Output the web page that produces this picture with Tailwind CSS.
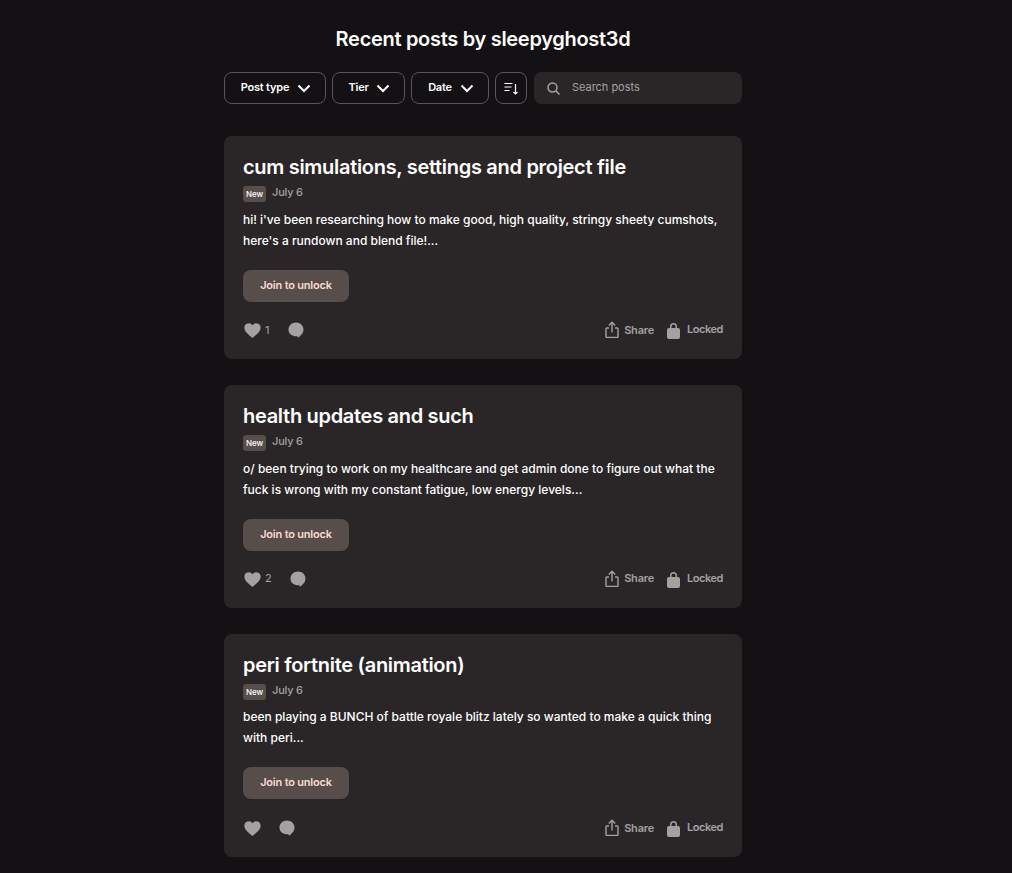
<!DOCTYPE html>
<html lang="en">
<head>
  <meta charset="UTF-8" />
  <title>Recent posts by sleepyghost3d</title>
  <script src="https://cdn.jsdelivr.net/npm/@tailwindcss/browser@4"></script>
</head>
<body class="bg-[#141114] text-white font-['Inter',sans-serif] h-[873px] overflow-hidden">
  <main class="w-[518px] ml-[224px]">

    <!-- Header -->
    <h1 class="pt-[26px] text-center text-[20px] leading-[26px] font-semibold tracking-[-0.3px]">Recent posts by sleepyghost3d</h1>

    <!-- Filters -->
    <div class="flex mt-[20px] h-[32px] gap-[6px]">
      <button class="w-[102px] pl-[2px] flex items-center justify-center gap-[8px] border border-[#5a5658] rounded-lg text-[11px] font-semibold tracking-[-0.2px]">
        <span class="mt-[-2px]">Post type</span>
        <svg class="w-[14px] h-[14px]" fill="none" stroke="currentColor" stroke-width="2" viewBox="0 0 14 14"><path d="M1.500 4.500 7 10l5.500-5.500"/></svg>
      </button>
      <button class="w-[73px] pl-[1px] flex items-center justify-center gap-[7px] border border-[#5a5658] rounded-lg text-[11px] font-semibold tracking-[-0.2px]">
        <span class="mt-[-2px]">Tier</span>
        <svg class="w-[14px] h-[14px]" fill="none" stroke="currentColor" stroke-width="2" viewBox="0 0 14 14"><path d="M1.500 4.500 7 10l5.500-5.500"/></svg>
      </button>
      <button class="w-[78px] pl-[2px] flex items-center justify-center gap-[8px] border border-[#5a5658] rounded-lg text-[11px] font-semibold tracking-[-0.2px]">
        <span class="mt-[-2px]">Date</span>
        <svg class="w-[14px] h-[14px]" fill="none" stroke="currentColor" stroke-width="2" viewBox="0 0 14 14"><path d="M1.500 4.500 7 10l5.500-5.500"/></svg>
      </button>
      <button class="w-[32px] flex items-center justify-center border border-[#5a5658] rounded-lg">
        <svg class="w-[16px] h-[16px]" fill="none" stroke="currentColor" stroke-width="1.200" viewBox="0 0 16 16"><path d="M1.500 3.500h8M1.500 7h7M1.500 10.500h5M12.500 4v10M10.500 12l2 2 2-2"/></svg>
      </button>
      <div class="ml-[1px] flex-1 flex items-center bg-[#2a2628] rounded-lg pl-[13px]">
        <svg class="w-[13px] h-[13px] text-[#a3a1a2]" fill="none" stroke="currentColor" stroke-width="1.500" viewBox="0 0 13 13"><circle cx="5.500" cy="5.500" r="4.500"/><path d="m9 9 3.500 3.500"/></svg>
        <span class="ml-[12px] mt-[-2px] text-[11px] tracking-[-0.03px] text-[#a3a1a2]">Search posts</span>
      </div>
    </div>

    <!-- Posts -->
    <div class="mt-[32px] flex flex-col gap-[26px]">

      <article class="h-[223px] bg-[#2a2628] rounded-lg pt-[18px] px-[19px]">
        <h2 class="text-[20px] leading-[26px] font-semibold tracking-[-0.3px]">cum simulations, settings and project file</h2>
        <div class="flex items-start mt-[6px] h-[16px]">
          <span class="w-[23px] h-[16px] pb-[1px] flex items-center justify-center bg-[#574d4b] rounded-[3px] text-[8px] font-medium">New</span>
          <span class="ml-[6px] mt-[-2px] text-[11px] leading-[16px] font-medium tracking-[-0.2px] text-[#a3a1a2]">July 6</span>
        </div>
        <p class="mt-[7px] text-[12px] leading-[21px] font-medium">hi! i've been researching how to make good, high quality, stringy sheety cumshots, here's a rundown and blend file!...</p>
        <button class="block mt-[19px] w-[106px] h-[32px] pb-[2px] bg-[#574d4b] rounded-lg text-[11px] font-semibold tracking-[-0.2px] text-[#f7dcd2]">Join to unlock</button>
        <div class="flex items-center mt-[18px] h-[20px] text-[#a3a1a2]">
          <svg class="ml-[1px] w-[17px] h-[17px]" fill="currentColor" viewBox="0 0 24 24"><path d="M12 22.500C8 19 .5 14 .5 8A6.300 6.300 0 0 1 12 4.500 6.300 6.300 0 0 1 23.500 8c0 6-7.500 11-11.500 14.500Z"/></svg>
          <span class="ml-[4px] w-[7px] text-[11px]">1</span>
          <svg class="ml-[16px] w-[16px] h-[16px]" fill="currentColor" viewBox="0 0 16 16"><path d="M8 .5c4 0 7.500 2.800 7.500 7 0 3-1.700 5.200-3.500 6.500-.5.5-1 1.500-1.800 1.500-.6 0-.6-1-.9-1.200C4 14.500.5 12 .5 7.500c0-4.200 3.500-7 7.500-7Z"/></svg>
          <div class="ml-auto flex items-center">
            <svg class="w-[14px] h-[18px]" fill="none" stroke="currentColor" stroke-width="1.400" stroke-linejoin="round" viewBox="0 0 14 18"><path d="M4 7H1.700a.7.7 0 0 0-.7.700v8a.7.7 0 0 0 .7.700h10.600a.7.7 0 0 0 .7-.7v-8a.7.7 0 0 0-.7-.7H10M7 11.500V1.500M3.800 4.500 7 1.300l3.200 3.200"/></svg>
            <span class="ml-[5px] text-[11px] font-semibold tracking-[-0.2px]">Share</span>
            <svg class="ml-[13px] w-[13px] h-[17px]" fill="currentColor" viewBox="0 0 13 17"><path d="M3 6V4.500a3.500 3.500 0 0 1 7 0V6h1a2 2 0 0 1 2 2v7a2 2 0 0 1-2 2H2a2 2 0 0 1-2-2V8a2 2 0 0 1 2-2Zm1.500 0h4V4.500a2 2 0 0 0-4 0Z"/></svg>
            <span class="ml-[7px] mt-[-2px] text-[11px] font-semibold tracking-[-0.45px]">Locked</span>
          </div>
        </div>
      </article>

      <article class="h-[223px] bg-[#2a2628] rounded-lg pt-[18px] px-[19px]">
        <h2 class="text-[20px] leading-[26px] font-semibold tracking-[-0.3px]">health updates and such</h2>
        <div class="flex items-start mt-[6px] h-[16px]">
          <span class="w-[23px] h-[16px] pb-[1px] flex items-center justify-center bg-[#574d4b] rounded-[3px] text-[8px] font-medium">New</span>
          <span class="ml-[6px] mt-[-2px] text-[11px] leading-[16px] font-medium tracking-[-0.2px] text-[#a3a1a2]">July 6</span>
        </div>
        <p class="mt-[7px] text-[12px] leading-[21px] font-medium">o/ been trying to work on my healthcare and get admin done to figure out what the fuck is wrong with my constant fatigue, low energy levels...</p>
        <button class="block mt-[19px] w-[106px] h-[32px] pb-[2px] bg-[#574d4b] rounded-lg text-[11px] font-semibold tracking-[-0.2px] text-[#f7dcd2]">Join to unlock</button>
        <div class="flex items-center mt-[18px] h-[20px] text-[#a3a1a2]">
          <svg class="ml-[1px] w-[17px] h-[17px]" fill="currentColor" viewBox="0 0 24 24"><path d="M12 22.500C8 19 .5 14 .5 8A6.300 6.300 0 0 1 12 4.500 6.300 6.300 0 0 1 23.500 8c0 6-7.500 11-11.500 14.500Z"/></svg>
          <span class="ml-[4px] w-[9px] text-[11px] mt-[-2px]">2</span>
          <svg class="ml-[16px] w-[16px] h-[16px]" fill="currentColor" viewBox="0 0 16 16"><path d="M8 .5c4 0 7.500 2.800 7.500 7 0 3-1.700 5.200-3.500 6.500-.5.5-1 1.500-1.800 1.500-.6 0-.6-1-.9-1.200C4 14.500.5 12 .5 7.500c0-4.200 3.500-7 7.500-7Z"/></svg>
          <div class="ml-auto flex items-center">
            <svg class="w-[14px] h-[18px]" fill="none" stroke="currentColor" stroke-width="1.400" stroke-linejoin="round" viewBox="0 0 14 18"><path d="M4 7H1.700a.7.7 0 0 0-.7.700v8a.7.7 0 0 0 .7.700h10.600a.7.7 0 0 0 .7-.7v-8a.7.7 0 0 0-.7-.7H10M7 11.500V1.500M3.800 4.500 7 1.300l3.200 3.200"/></svg>
            <span class="ml-[5px] mt-[-2px] text-[11px] font-semibold tracking-[-0.2px]">Share</span>
            <svg class="ml-[13px] w-[13px] h-[17px]" fill="currentColor" viewBox="0 0 13 17"><path d="M3 6V4.500a3.500 3.500 0 0 1 7 0V6h1a2 2 0 0 1 2 2v7a2 2 0 0 1-2 2H2a2 2 0 0 1-2-2V8a2 2 0 0 1 2-2Zm1.500 0h4V4.500a2 2 0 0 0-4 0Z"/></svg>
            <span class="ml-[7px] mt-[-2px] text-[11px] font-semibold tracking-[-0.45px]">Locked</span>
          </div>
        </div>
      </article>

      <article class="h-[223px] bg-[#2a2628] rounded-lg pt-[18px] px-[19px]">
        <h2 class="text-[20px] leading-[26px] font-semibold tracking-[-0.3px]">peri fortnite (animation)</h2>
        <div class="flex items-start mt-[6px] h-[16px]">
          <span class="w-[23px] h-[16px] pb-[1px] flex items-center justify-center bg-[#574d4b] rounded-[3px] text-[8px] font-medium">New</span>
          <span class="ml-[6px] mt-[-2px] text-[11px] leading-[16px] font-medium tracking-[-0.2px] text-[#a3a1a2]">July 6</span>
        </div>
        <p class="mt-[6px] text-[12px] leading-[21px] font-medium">been playing a BUNCH of battle royale blitz lately so wanted to make a quick thing with peri...</p>
        <button class="block mt-[19px] w-[106px] h-[32px] pb-[2px] bg-[#574d4b] rounded-lg text-[11px] font-semibold tracking-[-0.2px] text-[#f7dcd2]">Join to unlock</button>
        <div class="flex items-center mt-[19px] h-[20px] text-[#a3a1a2]">
          <svg class="ml-[1px] w-[17px] h-[17px]" fill="currentColor" viewBox="0 0 24 24"><path d="M12 22.500C8 19 .5 14 .5 8A6.300 6.300 0 0 1 12 4.500 6.300 6.300 0 0 1 23.500 8c0 6-7.500 11-11.500 14.500Z"/></svg>
          <svg class="ml-[18px] w-[16px] h-[16px]" fill="currentColor" viewBox="0 0 16 16"><path d="M8 .5c4 0 7.500 2.800 7.500 7 0 3-1.700 5.200-3.500 6.500-.5.5-1 1.500-1.800 1.500-.6 0-.6-1-.9-1.200C4 14.500.5 12 .5 7.500c0-4.200 3.500-7 7.500-7Z"/></svg>
          <div class="ml-auto flex items-center">
            <svg class="w-[14px] h-[18px]" fill="none" stroke="currentColor" stroke-width="1.400" stroke-linejoin="round" viewBox="0 0 14 18"><path d="M4 7H1.700a.7.7 0 0 0-.7.700v8a.7.7 0 0 0 .7.700h10.600a.7.7 0 0 0 .7-.7v-8a.7.7 0 0 0-.7-.7H10M7 11.500V1.500M3.800 4.500 7 1.300l3.200 3.200"/></svg>
            <span class="ml-[5px] text-[11px] font-semibold tracking-[-0.2px]">Share</span>
            <svg class="ml-[13px] w-[13px] h-[17px]" fill="currentColor" viewBox="0 0 13 17"><path d="M3 6V4.500a3.500 3.500 0 0 1 7 0V6h1a2 2 0 0 1 2 2v7a2 2 0 0 1-2 2H2a2 2 0 0 1-2-2V8a2 2 0 0 1 2-2Zm1.500 0h4V4.500a2 2 0 0 0-4 0Z"/></svg>
            <span class="ml-[7px] mt-[-2px] text-[11px] font-semibold tracking-[-0.45px]">Locked</span>
          </div>
        </div>
      </article>

    </div>
  </main>
</body>
</html>
